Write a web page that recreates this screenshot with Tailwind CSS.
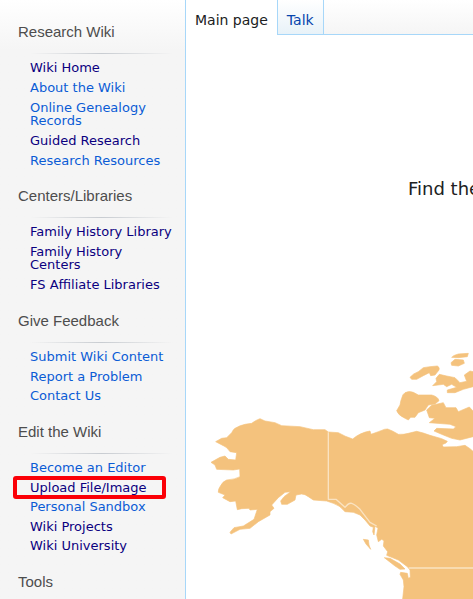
<!DOCTYPE html>
<html lang="en">
<head>
    <meta charset="UTF-8">
    <meta name="viewport" content="width=device-width, initial-scale=1.0">
    <title>Research Wiki</title>
    <script src="https://cdn.jsdelivr.net/npm/@tailwindcss/browser@4"></script>
</head>
<body class="min-h-screen flex bg-white overflow-x-hidden font-['DejaVu_Sans',sans-serif]">
    <!-- Sidebar -->
    <aside class="w-[185px] shrink-0 bg-[#f5f5f5] bg-linear-to-b from-white to-[#f5f5f5] to-[50px] pt-[22px] pl-[18px] pr-3">
        <nav>
            <h3 class="font-['Liberation_Sans',sans-serif] text-[15px] leading-5 text-[#4d4d4d]">Research Wiki</h3>
            <div class="h-px mt-[11px] mb-[7px] ml-3 bg-linear-to-r from-transparent via-[#c8ccd1] to-transparent"></div>
            <ul class="pl-3 text-[13px] leading-[13px] text-[#0b5cd5]">
                <li class="mb-[7px]"><a href="#" class="text-[#0b0080]">Wiki Home</a></li>
                <li class="mb-[7px]"><a href="#">About the Wiki</a></li>
                <li class="mb-[7px]"><a href="#">Online Genealogy Records</a></li>
                <li class="mb-[7px]"><a href="#" class="text-[#0b0080]">Guided Research</a></li>
                <li class="mb-[7px]"><a href="#">Research Resources</a></li>
            </ul>
        </nav>
        <nav class="pt-3">
            <h3 class="font-['Liberation_Sans',sans-serif] text-[15px] leading-5 text-[#4d4d4d]">Centers/Libraries</h3>
            <div class="h-px mt-[11px] mb-[7px] ml-3 bg-linear-to-r from-transparent via-[#c8ccd1] to-transparent"></div>
            <ul class="pl-3 text-[13px] leading-[13px] text-[#0b0080]">
                <li class="mb-[7px] whitespace-nowrap"><a href="#">Family History Library</a></li>
                <li class="mb-[7px]"><a href="#">Family History<br>Centers</a></li>
                <li class="mb-[7px]"><a href="#">FS Affiliate Libraries</a></li>
            </ul>
        </nav>
        <nav class="pt-[13px]">
            <h3 class="font-['Liberation_Sans',sans-serif] text-[15px] leading-5 text-[#4d4d4d]">Give Feedback</h3>
            <div class="h-px mt-[11px] mb-[7px] ml-3 bg-linear-to-r from-transparent via-[#c8ccd1] to-transparent"></div>
            <ul class="pl-3 text-[13px] leading-[13px] text-[#0b5cd5]">
                <li class="mb-[7px]"><a href="#">Submit Wiki Content</a></li>
                <li class="mb-[6px]"><a href="#">Report a Problem</a></li>
                <li class="mb-[7px]"><a href="#">Contact Us</a></li>
            </ul>
        </nav>
        <nav class="pt-[13px]">
            <h3 class="font-['Liberation_Sans',sans-serif] text-[15px] leading-5 text-[#4d4d4d]">Edit the Wiki</h3>
            <div class="h-px mt-[11px] mb-[7px] ml-3 bg-linear-to-r from-transparent via-[#c8ccd1] to-transparent"></div>
            <ul class="pl-3 text-[13px] leading-[13px] text-[#0b5cd5]">
                <li class="mb-[7px]"><a href="#">Become an Editor</a></li>
                <li class="mb-[6px] relative">
                    <a href="#" class="text-[#0b0080]">Upload File/Image</a>
                    <!-- Highlight -->
                    <span class="absolute -inset-y-[5px] -left-[17px] w-[153px] border-4 border-[#fb0007] rounded-[3px] pointer-events-none"></span>
                </li>
                <li class="mb-[7px]"><a href="#">Personal Sandbox</a></li>
                <li class="mb-[6px]"><a href="#" class="text-[#0b0080]">Wiki Projects</a></li>
                <li class="mb-[7px]"><a href="#" class="text-[#0b0080]">Wiki University</a></li>
            </ul>
        </nav>
        <nav class="pt-[13px]">
            <h3 class="font-['Liberation_Sans',sans-serif] text-[15px] leading-5 text-[#4d4d4d]">Tools</h3>
        </nav>
    </aside>

    <main class="flex-1 min-w-0 overflow-hidden border-l border-[#a7d7f9]">
        <!-- Tabs -->
        <div class="flex h-[35px] text-sm leading-5 bg-linear-to-b from-white to-[#f5f5f5]">
            <a href="#" class="pt-[10px] px-[9px] bg-white text-[#202122] whitespace-nowrap">Main page</a>
            <a href="#" class="pt-[10px] px-[9px] border-x border-b border-[#a7d7f9] bg-linear-to-b from-white to-[#e8f2f8] text-[#0645ad]">Talk</a>
            <div class="flex-1 border-b border-[#a7d7f9]"></div>
        </div>

        <p class="mt-[142px] ml-[222px] text-lg leading-6 text-[#202122] whitespace-nowrap">Find the</p>

        <!-- North America map -->
        <svg class="mt-[139px] ml-[14px] w-[273px] h-[259px]" viewBox="0 0 819 777" fill="#f4c27d" stroke="#f4c27d" stroke-width="2" stroke-linejoin="round">
            <path d="M47 305L65 295L80 293L95 278Q100 268 105 265Q120 256 135 253L155 250Q168 240 180 236L195 243L225 248L245 257L300 260L340 269L375 269L385 276L415 278Q436 290 458 297Q480 278 510 273L513 283L535 275L543 272Q555 266 563 267Q580 273 595 283Q612 284 625 280L650 274Q670 278 690 286L725 296L742 304L738 309L726 314L730 321L770 320L795 316L810 326L819 334V777H608L612 740L610 720L600 703L602 697L622 700L625 715L631 712L630 690L622 680L595 660L560 646L563 635L550 618L552 602L545 598L535 605L530 585L534 565L525 558L522 585L518 575L520 562L510 558L495 540L480 525L460 517L435 515Q418 495 400 490L380 483L340 480L325 470Q315 462 305 462L288 465L285 480L262 493H245L242 483L252 470L272 455L255 457L235 473L215 495L222 505L210 515V525L175 545L150 565L120 568L93 582L90 577L102 563L130 558L162 538L172 508L150 510L147 505L125 506L112 509L107 483L90 485L68 473L75 465L55 457Q54 448 60 440Q68 424 80 420Q106 418 120 410L119 387L100 390L50 388L45 375L33 367L60 352L75 348L85 358L107 360L110 338L90 335Q80 320 70 317Z"/>
            <path d="M490 598L505 600L507 615L512 628L498 612Z"/>
            <path d="M553 653L570 655L600 672L615 687L600 688L585 678Z"/>
            <!-- Arctic islands -->
            <path d="M630 112Q640 100 655 95L670 83L690 80L712 78Q720 82 717 90L705 105L692 107L688 98L670 107L650 118H635Z"/>
            <path d="M755 52Q764 44 775 42L805 40L802 50L775 53Z"/>
            <path d="M753 68L765 58L790 60L793 70L775 78L755 76Z"/>
            <path d="M698 137L710 125L708 115L718 103L740 108L765 113L780 128L800 124L793 105L810 93L819 95V140L790 148L765 158H742V150L770 142L755 133L740 140L730 133Z"/>
            <path d="M590 212L600 195Q602 182 605 175Q608 162 615 158Q628 152 640 157L655 165L695 165Q714 170 717 182L705 192L685 195L675 210L655 218L645 232H632L625 240L615 235Q594 225 590 212Z"/>
            <path d="M680 210L695 196L730 188L738 203L768 203L775 215L808 201L819 213V290L780 300L755 295L730 285L702 273L710 265L760 267L768 260L750 253L688 248L705 235L688 233Z"/>
            <!-- Borders -->
            <g fill="none" stroke="#fae3c2" stroke-width="4">
                <path d="M385 277V478H408L435 502Q446 488 455 490Q466 494 480 508L510 547L530 558"/>
                <path d="M626 684H819"/>
            </g>
        </svg>
    </main>
</body>
</html>
